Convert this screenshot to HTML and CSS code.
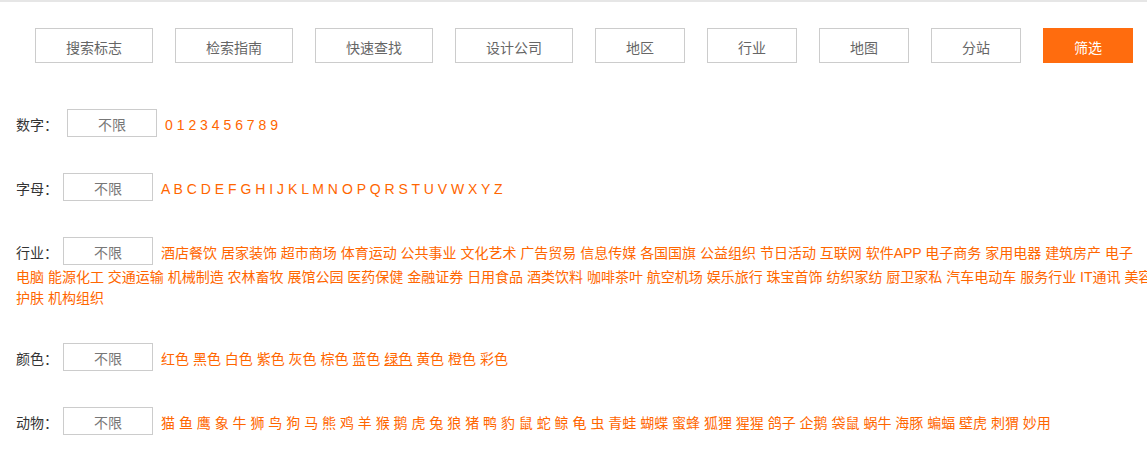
FILE: index.html
```html
<!DOCTYPE html>
<html lang="zh-CN">
<head>
<meta charset="utf-8">
<title>筛选</title>
<link rel="stylesheet" href="styles.css">
</head>
<body>
<div class="topbar"></div>
<nav class="tabs">
  <a class="tab" href="#">搜索标志</a>
  <a class="tab" href="#">检索指南</a>
  <a class="tab" href="#">快速查找</a>
  <a class="tab" href="#">设计公司</a>
  <a class="tab tab--narrow" href="#">地区</a>
  <a class="tab tab--narrow" href="#">行业</a>
  <a class="tab tab--narrow" href="#">地图</a>
  <a class="tab tab--narrow" href="#">分站</a>
  <a class="tab tab--narrow tab--active" href="#">筛选</a>
</nav>
<div class="filters">
  <div class="row row--digits"><span class="label">数字：</span><span class="any">不限</span><span class="opts"><a href="#">0</a> <a href="#">1</a> <a href="#">2</a> <a href="#">3</a> <a href="#">4</a> <a href="#">5</a> <a href="#">6</a> <a href="#">7</a> <a href="#">8</a> <a href="#">9</a></span></div>
  <div class="row"><span class="label">字母：</span><span class="any">不限</span><span class="opts"><a href="#">A</a> <a href="#">B</a> <a href="#">C</a> <a href="#">D</a> <a href="#">E</a> <a href="#">F</a> <a href="#">G</a> <a href="#">H</a> <a href="#">I</a> <a href="#">J</a> <a href="#">K</a> <a href="#">L</a> <a href="#">M</a> <a href="#">N</a> <a href="#">O</a> <a href="#">P</a> <a href="#">Q</a> <a href="#">R</a> <a href="#">S</a> <a href="#">T</a> <a href="#">U</a> <a href="#">V</a> <a href="#">W</a> <a href="#">X</a> <a href="#">Y</a> <a href="#">Z</a></span></div>
  <div class="row"><span class="label">行业：</span><span class="any">不限</span><span class="opts"><a href="#">酒店餐饮</a> <a href="#">居家装饰</a> <a href="#">超市商场</a> <a href="#">体育运动</a> <a href="#">公共事业</a> <a href="#">文化艺术</a> <a href="#">广告贸易</a> <a href="#">信息传媒</a> <a href="#">各国国旗</a> <a href="#">公益组织</a> <a href="#">节日活动</a> <a href="#">互联网</a> <a href="#">软件APP</a> <a href="#">电子商务</a> <a href="#">家用电器</a> <a href="#">建筑房产</a> <a href="#">电子<span class="nowrap">电脑</span></a> <a href="#">能源化工</a> <a href="#">交通运输</a> <a href="#">机械制造</a> <a href="#">农林畜牧</a> <a href="#">展馆公园</a> <a href="#">医药保健</a> <a href="#">金融证券</a> <a href="#">日用食品</a> <a href="#">酒类饮料</a> <a href="#">咖啡茶叶</a> <a href="#">航空机场</a> <a href="#">娱乐旅行</a> <a href="#">珠宝首饰</a> <a href="#">纺织家纺</a> <a href="#">厨卫家私</a> <a href="#">汽车电动车</a> <a href="#">服务行业</a> <a href="#">IT通讯</a> <a href="#">美容护肤</a> <a href="#">机构组织</a></span></div>
  <div class="row"><span class="label">颜色：</span><span class="any">不限</span><span class="opts"><a href="#">红色</a> <a href="#">黑色</a> <a href="#">白色</a> <a href="#">紫色</a> <a href="#">灰色</a> <a href="#">棕色</a> <a href="#">蓝色</a> <a class="is-hover" href="#">绿色</a> <a href="#">黄色</a> <a href="#">橙色</a> <a href="#">彩色</a></span></div>
  <div class="row"><span class="label">动物：</span><span class="any">不限</span><span class="opts"><a href="#">猫</a> <a href="#">鱼</a> <a href="#">鹰</a> <a href="#">象</a> <a href="#">牛</a> <a href="#">狮</a> <a href="#">鸟</a> <a href="#">狗</a> <a href="#">马</a> <a href="#">熊</a> <a href="#">鸡</a> <a href="#">羊</a> <a href="#">猴</a> <a href="#">鹅</a> <a href="#">虎</a> <a href="#">兔</a> <a href="#">狼</a> <a href="#">猪</a> <a href="#">鸭</a> <a href="#">豹</a> <a href="#">鼠</a> <a href="#">蛇</a> <a href="#">鲸</a> <a href="#">龟</a> <a href="#">虫</a> <a href="#">青蛙</a> <a href="#">蝴蝶</a> <a href="#">蜜蜂</a> <a href="#">狐狸</a> <a href="#">猩猩</a> <a href="#">鸽子</a> <a href="#">企鹅</a> <a href="#">袋鼠</a> <a href="#">蜗牛</a> <a href="#">海豚</a> <a href="#">蝙蝠</a> <a href="#">壁虎</a> <a href="#">刺猬</a> <a href="#">妙用</a></span></div>
</div>
</body>
</html>
```

FILE: styles.css
```css
html {
  overflow-x: hidden;
}

body {
  margin: 0;
  background: #fff;
  color: #333;
  font-family: "Liberation Sans", "Noto Sans CJK SC", sans-serif;
  font-size: 14px;
}

.topbar {
  height: 2px;
  background: #e6e6e6;
}

.tabs {
  display: flex;
  gap: 22px;
  margin: 26px 0 0 35px;
}

.tab {
  box-sizing: border-box;
  width: 118px;
  height: 35px;
  border: 1px solid #ccc;
  color: #666;
  text-align: center;
  line-height: 38px;
  text-decoration: none;
  overflow: hidden;
}

.tab--narrow {
  width: 90px;
}

.tab--active {
  background: #ff6c0e;
  border-color: #ff6c0e;
  color: #fff;
}

.filters {
  width: 1140px;
  margin-top: 46px;
  padding-left: 16px;
}

.row {
  line-height: 21px;
  margin-bottom: 34px;
}

.label {
  color: #333;
}

.any {
  display: inline-block;
  box-sizing: border-box;
  width: 90px;
  height: 28px;
  margin: 0 0 2px 5px;
  border: 1px solid #ccc;
  color: #777;
  text-align: center;
  line-height: 30px;
}

.row--digits .any {
  margin-left: 9px;
}

.opts {
  margin-left: 8px;
}

.opts a {
  color: #ff6600;
  text-decoration: none;
}

.opts a.is-hover {
  text-decoration: underline;
}

.nowrap {
  white-space: nowrap;
}
```
